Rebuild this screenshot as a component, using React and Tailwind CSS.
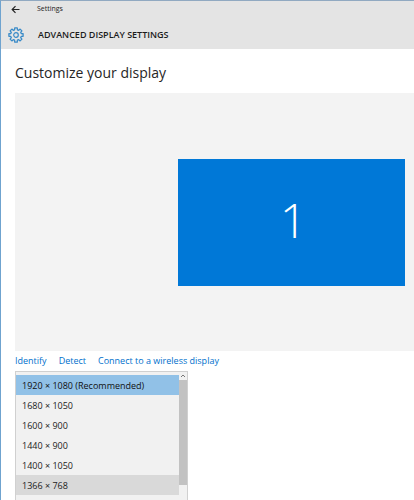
import React, { useState } from 'react';

const RESOLUTIONS = [
  '1920 × 1080 (Recommended)',
  '1680 × 1050',
  '1600 × 900',
  '1440 × 900',
  '1400 × 1050',
  '1366 × 768',
];

// outline of an eight-tooth gear, centred on 8,8
function gearPath() {
  const points = [];
  for (let i = 0; i < 8; i++) {
    [[-15, 5.4], [-10, 7.2], [10, 7.2], [15, 5.4]].forEach(([offset, r]) => {
      const a = ((i * 45 + offset) * Math.PI) / 180;
      points.push(`${(8 + r * Math.cos(a)).toFixed(2)} ${(8 + r * Math.sin(a)).toFixed(2)}`);
    });
  }
  return `M${points.join('L')}Z`;
}

function GearIcon() {
  return (
    <svg viewBox="0 0 16 16" className="h-4 w-4 shrink-0" fill="none" stroke="#3a8bc8" aria-hidden="true">
      <path d={gearPath()} strokeWidth="1.3" strokeLinejoin="round" />
      <circle cx="8" cy="8" r="2.3" strokeWidth="1.2" />
    </svg>
  );
}

function Header() {
  return (
    <header className="bg-[#e4e4e4] h-12">
      <div className="flex items-center h-4 pl-2.5">
        <button type="button" aria-label="Back" className="w-[26px] h-4 flex items-center">
          <svg viewBox="0 0 9 9" className="w-[9px] h-[9px]" fill="none" stroke="#222" aria-hidden="true">
            <path d="M8.5 4.5H1.2M4.5 1.2L1.2 4.5l3.3 3.3" strokeWidth="1.2" />
          </svg>
        </button>
        <span className="text-[7px] leading-4 text-[#222]">Settings</span>
      </div>
      <div className="flex items-center h-9 gap-3.5 pl-[7px]">
        <GearIcon />
        <h1 className="text-[9px] leading-4 font-semibold text-[#1c1c1c]">ADVANCED DISPLAY SETTINGS</h1>
      </div>
    </header>
  );
}

function ResolutionList() {
  const [resolution, setResolution] = useState(RESOLUTIONS[0]);

  return (
    <div className="flex flex-1 w-[173px] border border-b-0 border-[#d0d0d0] bg-[#f1f1f1]">
      <select
        size={6}
        aria-label="Resolution"
        value={resolution}
        onChange={(e) => setResolution(e.target.value)}
        className="flex-1 min-w-0 mt-[3px] overflow-hidden text-[9px] text-[#222] outline-none"
      >
        {RESOLUTIONS.map((item) => (
          <option
            key={item}
            value={item}
            className="h-5 min-h-5 px-[6px] pt-1 pb-0 last:bg-[#d9d9d9] checked:bg-[#91c1e7] checked:bg-linear-to-r checked:from-[#91c1e7] checked:to-[#91c1e7]"
          >
            {item}
          </option>
        ))}
      </select>
      <div className="w-2 flex flex-col" aria-hidden="true">
        <svg viewBox="0 0 8 8" className="w-2 h-2" fill="none" stroke="#777">
          <path d="M2 5l2-2 2 2" />
        </svg>
        <div className="h-[105px] bg-[#c2c2c2]" />
      </div>
    </div>
  );
}

function App() {
  return (
    <div className="min-h-screen flex flex-col bg-white border-t border-l border-t-[#91a9c1] border-l-[#6fa3cf] font-['Open_Sans','Noto_Sans',sans-serif]">
      <Header />
      <main className="flex-1 flex flex-col pl-3.5">
        <h2 className="pt-3 pb-2 text-[14px] leading-6 text-[#262626]">Customize your display</h2>
        <div className="h-[258px] flex items-center justify-end pr-[9px] bg-[#f3f3f3]">
          <button type="button" className="w-[227px] h-[127px] pb-1 pl-1 bg-[#0078d7] text-white text-[48px] font-light">
            1
          </button>
        </div>
        <nav className="flex gap-3 h-5 text-[9px] leading-5 text-[#0070cc]">
          <a href="#identify">Identify</a>
          <a href="#detect">Detect</a>
          <a href="#connect">Connect to a wireless display</a>
        </nav>
        <ResolutionList />
      </main>
    </div>
  );
}

export default App;
